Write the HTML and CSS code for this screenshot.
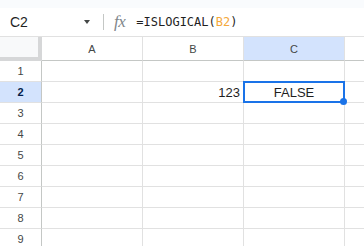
FILE: index.html
```html
<!DOCTYPE html>
<html>
  <head>
    <title>ISLOGICAL</title>
    <link rel="stylesheet" href="styles.css">
  </head>
  <body>
    <div class="top-strip"></div>
    <div class="formula-bar">
      <div class="name-box">
        <span class="cell-ref">C2</span>
        <span class="caret"></span>
      </div>
      <div class="divider"></div>
      <span class="fx">fx</span>
      <span class="formula">=ISLOGICAL(<span class="ref">B2</span>)</span>
    </div>
    <div class="sheet">
      <div class="corner"></div>
      <div class="col-head">A</div>
      <div class="col-head">B</div>
      <div class="col-head selected">C</div>
      <div class="col-head last"></div>

      <div class="row-head">1</div>
      <div class="cell"></div>
      <div class="cell"></div>
      <div class="cell"></div>
      <div class="cell last"></div>

      <div class="row-head selected">2</div>
      <div class="cell"></div>
      <div class="cell number">123</div>
      <div class="cell active">FALSE<div class="selection"><span class="handle"></span></div></div>
      <div class="cell last"></div>

      <div class="row-head">3</div>
      <div class="cell"></div>
      <div class="cell"></div>
      <div class="cell"></div>
      <div class="cell last"></div>

      <div class="row-head">4</div>
      <div class="cell"></div>
      <div class="cell"></div>
      <div class="cell"></div>
      <div class="cell last"></div>

      <div class="row-head">5</div>
      <div class="cell"></div>
      <div class="cell"></div>
      <div class="cell"></div>
      <div class="cell last"></div>

      <div class="row-head">6</div>
      <div class="cell"></div>
      <div class="cell"></div>
      <div class="cell"></div>
      <div class="cell last"></div>

      <div class="row-head">7</div>
      <div class="cell"></div>
      <div class="cell"></div>
      <div class="cell"></div>
      <div class="cell last"></div>

      <div class="row-head">8</div>
      <div class="cell"></div>
      <div class="cell"></div>
      <div class="cell"></div>
      <div class="cell last"></div>

      <div class="row-head">9</div>
      <div class="cell"></div>
      <div class="cell"></div>
      <div class="cell"></div>
      <div class="cell last"></div>
    </div>
  </body>
</html>
```

FILE: styles.css
```css
body {
  margin: 0;
  width: 364px;
  height: 246px;
  overflow: hidden;
  background: #fff;
  font-family: "Liberation Sans", Arial, sans-serif;
  color: #1f1f1f;
}
.top-strip {
  height: 8px;
  background: #f9fbfd;
}
.formula-bar {
  display: flex;
  align-items: center;
  height: 29px;
  box-sizing: border-box;
  border-bottom: 1px solid #e1e1e1;
}
.name-box {
  display: flex;
  align-items: center;
  justify-content: space-between;
  width: 103px;
  box-sizing: border-box;
  padding: 0 13px 0 10px;
}
.cell-ref {
  font-size: 14px;
}
.caret {
  width: 0;
  height: 0;
  border-left: 3.5px solid transparent;
  border-right: 3.5px solid transparent;
  border-top: 4px solid #444746;
}
.divider {
  width: 1px;
  height: 16px;
  background: #c4c7c5;
}
.fx {
  margin-left: 10px;
  font-family: "Liberation Serif", "Times New Roman", serif;
  font-style: italic;
  font-size: 17px;
  color: #80868b;
  letter-spacing: -0.5px;
}
.formula {
  margin-left: 11px;
  font-family: "DejaVu Sans Mono", monospace;
  font-size: 12px;
  color: #1f1f1f;
}
.formula .ref {
  color: #f4a93b;
}
.sheet {
  display: grid;
  grid-template-columns: 42px 101px 101px 101px 1fr;
  grid-template-rows: 24px;
  grid-auto-rows: 21px;
}
.sheet > div {
  box-sizing: border-box;
  border-right: 1px solid #e1e1e1;
  border-bottom: 1px solid #e1e1e1;
}
.sheet > .last {
  border-right: none;
}
.corner {
  background: #f8f9fa;
  border-right: 4px solid #d6d7d8 !important;
  border-bottom: 4px solid #d6d7d8 !important;
}
.col-head {
  display: flex;
  align-items: center;
  justify-content: center;
  font-size: 11px;
  color: #444746;
  border-bottom-color: #c4c7c5 !important;
}
.row-head {
  display: flex;
  align-items: center;
  justify-content: center;
  font-size: 11px;
  color: #444746;
  border-right-color: #c4c7c5 !important;
}
.col-head.selected,
.row-head.selected {
  background: #d3e3fd;
}
.row-head.selected {
  font-weight: bold;
  color: #041e49;
}
.cell {
  display: flex;
  align-items: center;
  padding: 0 3px;
  font-size: 13px;
  color: #1f1f1f;
}
.cell.number {
  justify-content: flex-end;
}
.cell.active {
  position: relative;
  justify-content: center;
}
.selection {
  position: absolute;
  top: -1px;
  left: -1px;
  right: -1px;
  bottom: -1px;
  border: 2px solid #1a73e8;
}
.handle {
  position: absolute;
  right: -4px;
  bottom: -4px;
  width: 7px;
  height: 7px;
  border-radius: 50%;
  background: #1a73e8;
}
```
